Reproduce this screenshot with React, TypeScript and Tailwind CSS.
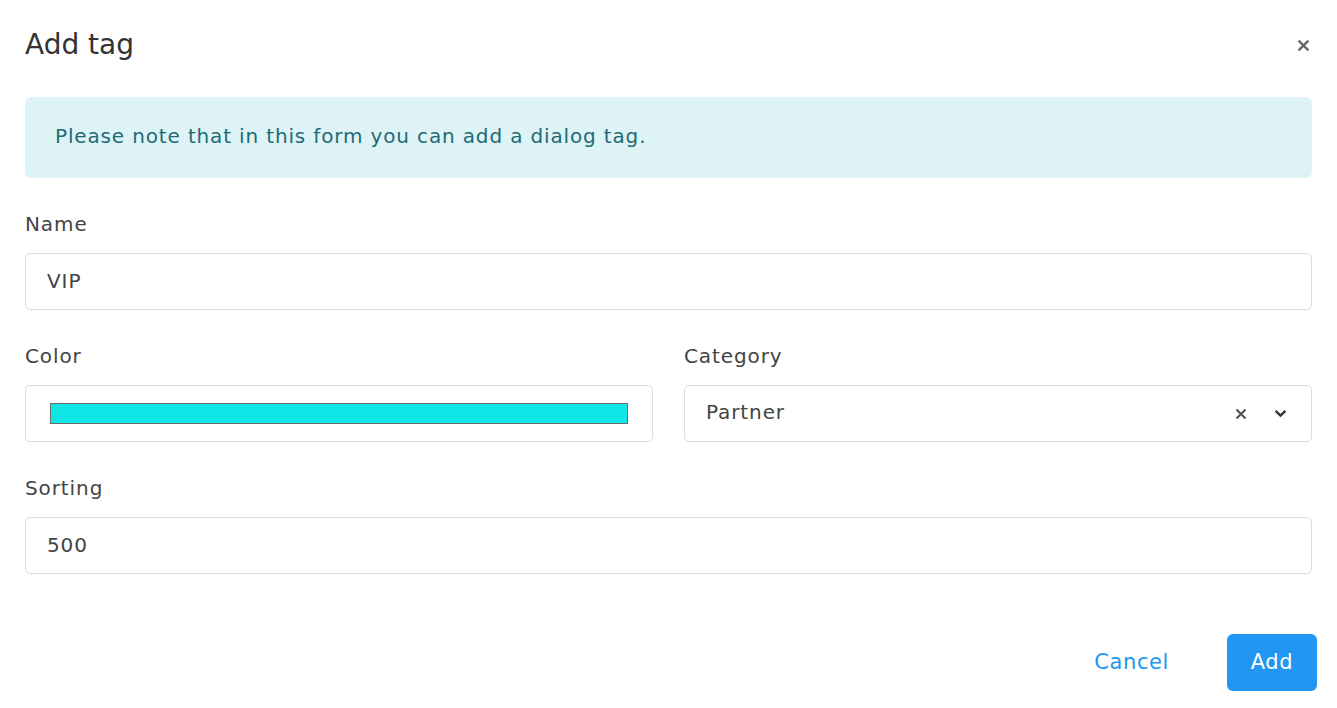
import React, { useState } from "react";

// Small inline icons
const CloseIcon = ({ className }: { className?: string }) => (
  <svg viewBox="0 0 12 12" className={className} fill="none" stroke="currentColor" strokeWidth="2.2" strokeLinecap="butt">
    <path d="M1.5 1.5 L10.5 10.5 M10.5 1.5 L1.5 10.5" />
  </svg>
);

const ChevronIcon = ({ className }: { className?: string }) => (
  <svg viewBox="0 0 12 8" className={className} fill="none" stroke="currentColor" strokeWidth="2.2">
    <path d="M1.5 1.5 L6 6 L10.5 1.5" />
  </svg>
);

const inputBox =
  "h-[57px] w-full rounded-[5px] border border-[#dcdcdc] bg-white px-[21px] text-[20px] tracking-[0.9px] text-[#444] outline-none";

const labelText = "block text-[20px] leading-[28px] tracking-[0.9px] text-[#444]";

const AddTag: React.FC = () => {
  const [name, setName] = useState("VIP");
  const [sorting, setSorting] = useState("500");

  return (
    <div className="min-h-[708px] w-full bg-white font-['DejaVu_Sans',sans-serif] text-[#444]">
      <div className="flex items-center justify-between pl-[25px] pr-[27px] pt-[25px]">
        <h2 className="text-[28px] leading-[40px] text-[#333]">Add tag</h2>
        <button type="button" className="text-[#666]">
          <CloseIcon className="h-[13px] w-[13px]" />
        </button>
      </div>

      <div className="px-[25px] pt-[32px]">
        {/* Info alert */}
        <div className="flex h-[81px] items-center rounded-[6px] bg-[#ddf3f6] px-[30px] pb-[3px] text-[20px] tracking-[0.85px] text-[#1f6b75]">
          Please note that in this form you can add a dialog tag.
        </div>

        {/* Name */}
        <label className={`${labelText} mt-[32px]`}>Name</label>
        <input
          className={`${inputBox} mt-[15px] pb-[2px]`}
          value={name}
          onChange={(e) => setName(e.target.value)}
        />

        {/* Color + Category */}
        <div className="mt-[32px] grid grid-cols-2 gap-[31px]">
          <div>
            <label className={labelText}>Color</label>
            <div className={`${inputBox} mt-[15px] flex items-center px-[24px]`}>
              <div className="h-[21px] w-full border border-[#6b6b6b] bg-[#10e6e6]" />
            </div>
          </div>
          <div>
            <label className={labelText}>Category</label>
            <div className={`${inputBox} mt-[15px] flex items-center justify-between pr-[24px]`}>
              <span className="pb-[3px]">Partner</span>
              <div className="flex items-center gap-[27px] text-[#555]">
                <CloseIcon className="h-[12px] w-[12px]" />
                <ChevronIcon className="h-[9px] w-[13px] text-[#333]" />
              </div>
            </div>
          </div>
        </div>

        {/* Sorting */}
        <label className={`${labelText} mt-[32px]`}>Sorting</label>
        <input
          className={`${inputBox} mt-[15px] pb-[2px]`}
          value={sorting}
          onChange={(e) => setSorting(e.target.value)}
        />
      </div>

      {/* Footer buttons */}
      <div className="mt-[60px] flex items-center justify-end gap-[26px] pr-[20px]">
        <button type="button" className="h-[57px] px-[32px] text-[21px] tracking-[0.6px] text-[#2196f3]">
          Cancel
        </button>
        <button
          type="submit"
          className="h-[57px] w-[90px] rounded-[6px] bg-[#2196f3] text-[21px] tracking-[0.6px] text-white"
        >
          Add
        </button>
      </div>
    </div>
  );
};

export default function App() {
  return <AddTag />;
}
